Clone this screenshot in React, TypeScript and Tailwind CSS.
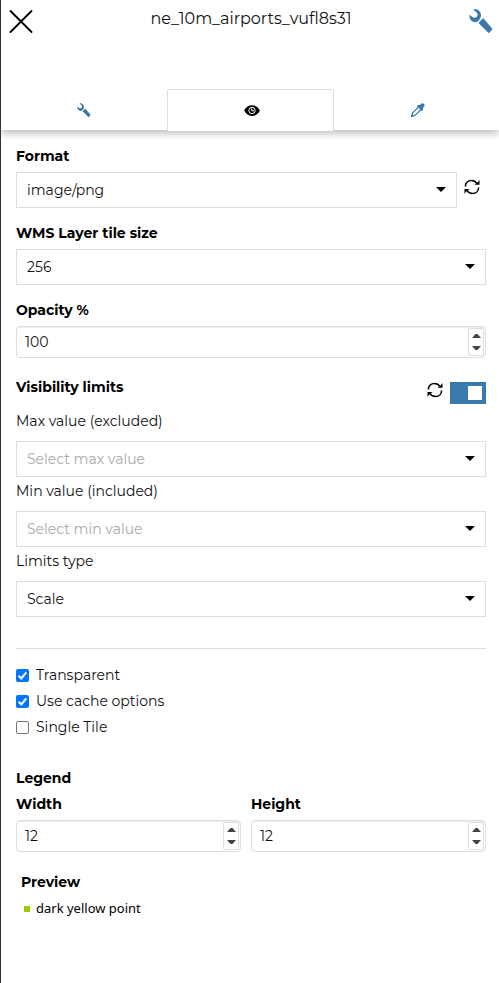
import React from "react";

function Wrench({ className }: { className: string }) {
  return (
    <svg viewBox="0 0 24 25" className={className} fill="#3a7aab">
      <path d="M4.100.6C6 0 8.300.2 10 1.700c2.300 2 2.700 5.300 1.100 7.900L9.700 11.600C8.400 13 6.500 13.500 4.700 13 1.800 12.200 0 9 .5 5.800L3.800 8.300C5 9 6.600 8.900 7.600 8 8.700 7 8.800 5.100 7.900 3.700Z" />
      <path d="m14.100 9.100 9.500 11-3.800 4.100-10.300-10.300Z" />
    </svg>
  );
}

function Refresh({ className }: { className: string }) {
  return (
    <svg viewBox="0 0 16 16" className={className} fill="none" stroke="#000" strokeWidth="1.5">
      <path d="M1.400 7.400C1.400 3.700 4 1.500 7.500 1.500c2.600 0 4.300 1.200 5.500 3.100M14.600 8.400c0 3.800-2.700 6-6.200 6-2.600 0-4.400-1.200-5.500-3.100" />
      <path d="M15.500 1.100v4.700H10.300l2.500-1.500ZM.5 14.800v-4.700h5.200l-2.500 1.500Z" fill="#000" stroke="none" />
    </svg>
  );
}

function Eye() {
  return (
    <svg viewBox="0 0 16 12" className="h-3 w-4">
      <path d="M.1 5.600C2 2.100 4.700.3 8 .3s6 1.800 7.900 5.300C14 9.200 11.300 10.900 8 10.900S2 9.200.1 5.600Z" fill="#000" />
      <circle cx="8" cy="5.500" r="3.200" fill="none" stroke="#fff" strokeWidth="1" />
      <path d="M7.700 3.500v2.300h2.300" fill="none" stroke="#fff" strokeWidth="1" />
    </svg>
  );
}

function Pipette() {
  return (
    <svg viewBox="0 0 14 14" className="h-3.5 w-3.5" fill="#3a7aab">
      <path d="M6.900 1.900 8.900 2.100 10.500.6C12-.5 14.500 1.700 13.300 3.500L11.800 5.100 12.100 7 10.800 8.100 5.900 3.200Z" />
      <path d="M7.400 4.100 1.700 9.800 1.100 12 .5 13.400 2.700 12.700 4.400 12.100 10 6.500" fill="none" stroke="#3a7aab" strokeWidth="1.200" />
      <path d="m0 14 .7-3.200 2.600 2.300Z" />
    </svg>
  );
}

function Title({ children }: { children: React.ReactNode }) {
  return <div className="h-5 whitespace-nowrap font-bold leading-5 text-black">{children}</div>;
}

function Select({ text, muted, className = "" }: { text: string; muted?: boolean; className?: string }) {
  return (
    <div className={`flex h-9 items-center justify-between border border-[#ddd] pl-2.5 pr-2.5 ${className}`}>
      <span className={`whitespace-nowrap ${muted ? "text-[#aaa]" : "text-[#111]"}`}>{text}</span>
      <svg viewBox="0 0 10 5" className="-mt-px h-[5px] w-2.5">
        <path d="M0 0h10L5 5Z" fill="#000" />
      </svg>
    </div>
  );
}

function NumberInput({ value }: { value: string }) {
  return (
    <div className="flex h-8 items-center justify-between rounded border border-[#ddd] pl-2 pr-px shadow-[inset_0_1px_1px_rgba(0,0,0,0.075)]">
      <span className="text-[#111]">{value}</span>
      <div className="flex h-7 w-4 flex-col items-center justify-between rounded-[2px] border border-[#ddd] bg-white py-[5px]">
        <svg viewBox="0 0 9 4" className="h-1 w-[9px]"><path d="M0 4h9L5.500 0h-2Z" fill="#444" /></svg>
        <svg viewBox="0 0 9 4" className="h-1 w-[9px]"><path d="M0 0h9L5.500 4h-2Z" fill="#444" /></svg>
      </div>
    </div>
  );
}

function Check({ label, on }: { label: string; on?: boolean }) {
  return (
    <div className="flex h-[26px] items-center">
      <span className={`mr-[7px] mt-px flex h-[13px] w-[13px] items-center justify-center rounded-[2px] ${on ? "bg-[#0075ff]" : "border border-[#767676] bg-white"}`}>
        {on && (
          <svg viewBox="0 0 13 13" className="h-[13px] w-[13px]">
            <path d="m2.600 6.800 2.700 2.700 5-6.200" fill="none" stroke="#fff" strokeWidth="2" />
          </svg>
        )}
      </span>
      <span className="whitespace-nowrap">{label}</span>
    </div>
  );
}

export default function App() {
  return (
    <div className="h-[983px] w-[499px] overflow-hidden border-l border-[#333] bg-white font-['Montserrat','Inter',sans-serif] text-sm leading-5 text-[#111]">
      <header className="flex h-[130px] flex-col justify-between shadow-[0_3px_8px_rgba(0,0,0,0.28)]">
        <div className="flex items-start justify-between pl-2 pr-1.5 pt-[9px]">
          <svg viewBox="0 0 24 24" className="h-6 w-6" fill="none" stroke="#000" strokeWidth="1.800" strokeLinecap="round">
            <path d="m1.500 2 21 21m0-21-21 21" />
          </svg>
          <h1 className="whitespace-nowrap text-base font-normal leading-5 text-[#111]">ne_10m_airports_vufl8s31</h1>
          <Wrench className="h-[25px] w-6" />
        </div>
        <div className="-mb-px grid h-[42px] grid-cols-[166px_167px_165px]">
          <div className="flex items-center justify-center"><Wrench className="h-[15px] w-3.5" /></div>
          <div className="flex items-center justify-center rounded-t-[2px] border border-b-0 border-[#ddd] bg-white pl-0.5"><Eye /></div>
          <div className="flex items-center justify-center pl-0.5"><Pipette /></div>
        </div>
      </header>

      <main className="pl-[15px] pr-[13px] pt-4">
        <Title>Format</Title>
        <div className="mb-[15px] mt-1.5 flex">
          <Select text="image/png" className="w-[441px]" />
          <Refresh className="ml-[7px] mt-[7px] h-4 w-4" />
        </div>
        <Title>WMS Layer tile size</Title>
        <Select text="256" className="mb-[15px] mt-1.5" />
        <Title>Opacity %</Title>
        <div className="mb-[19px] mt-1.5"><NumberInput value="100" /></div>

        <div className="flex h-[34px] justify-between">
          <Title>Visibility limits</Title>
          <div className="flex items-start">
            <Refresh className="mr-[7px] mt-[5px] h-4 w-4" />
            <span className="mt-[5px] flex h-[22px] w-9 items-center justify-end bg-[#3a7aab] pr-1"><span className="h-3.5 w-3.5 bg-white" /></span>
          </div>
        </div>
        <div className="h-5"><span className="whitespace-nowrap">Max value (excluded)</span></div>
        <Select text="Select max value" muted className="mb-1 mt-2.5" />
        <div className="h-5"><span className="whitespace-nowrap">Min value (included)</span></div>
        <Select text="Select min value" muted className="mb-1 mt-2.5" />
        <div className="h-5"><span>Limits type</span></div>
        <Select text="Scale" className="mt-2.5" />

        <hr className="mb-[13px] mt-[31px] border-[#ddd]" />
        <Check label="Transparent" on />
        <Check label="Use cache options" on />
        <Check label="Single Tile" />

        <div className="mt-7"><Title>Legend</Title></div>
        <div className="mt-1.5 grid grid-cols-[225px_235px] gap-2.5">
          <div><Title>Width</Title><div className="mt-1.5"><NumberInput value="12" /></div></div>
          <div><Title>Height</Title><div className="mt-1.5"><NumberInput value="12" /></div></div>
        </div>
        <div className="mt-5 pl-[5px]">
          <Title>Preview</Title>
          <div className="mt-1.5 flex h-5 items-center pl-[3px] font-['Noto_Sans',sans-serif] text-[13px] text-black">
            <span className="mr-1.5 mt-px h-1.5 w-1.5 bg-[#99cc00]" />
            <span className="whitespace-nowrap">dark yellow point</span>
          </div>
        </div>
      </main>
    </div>
  );
}
